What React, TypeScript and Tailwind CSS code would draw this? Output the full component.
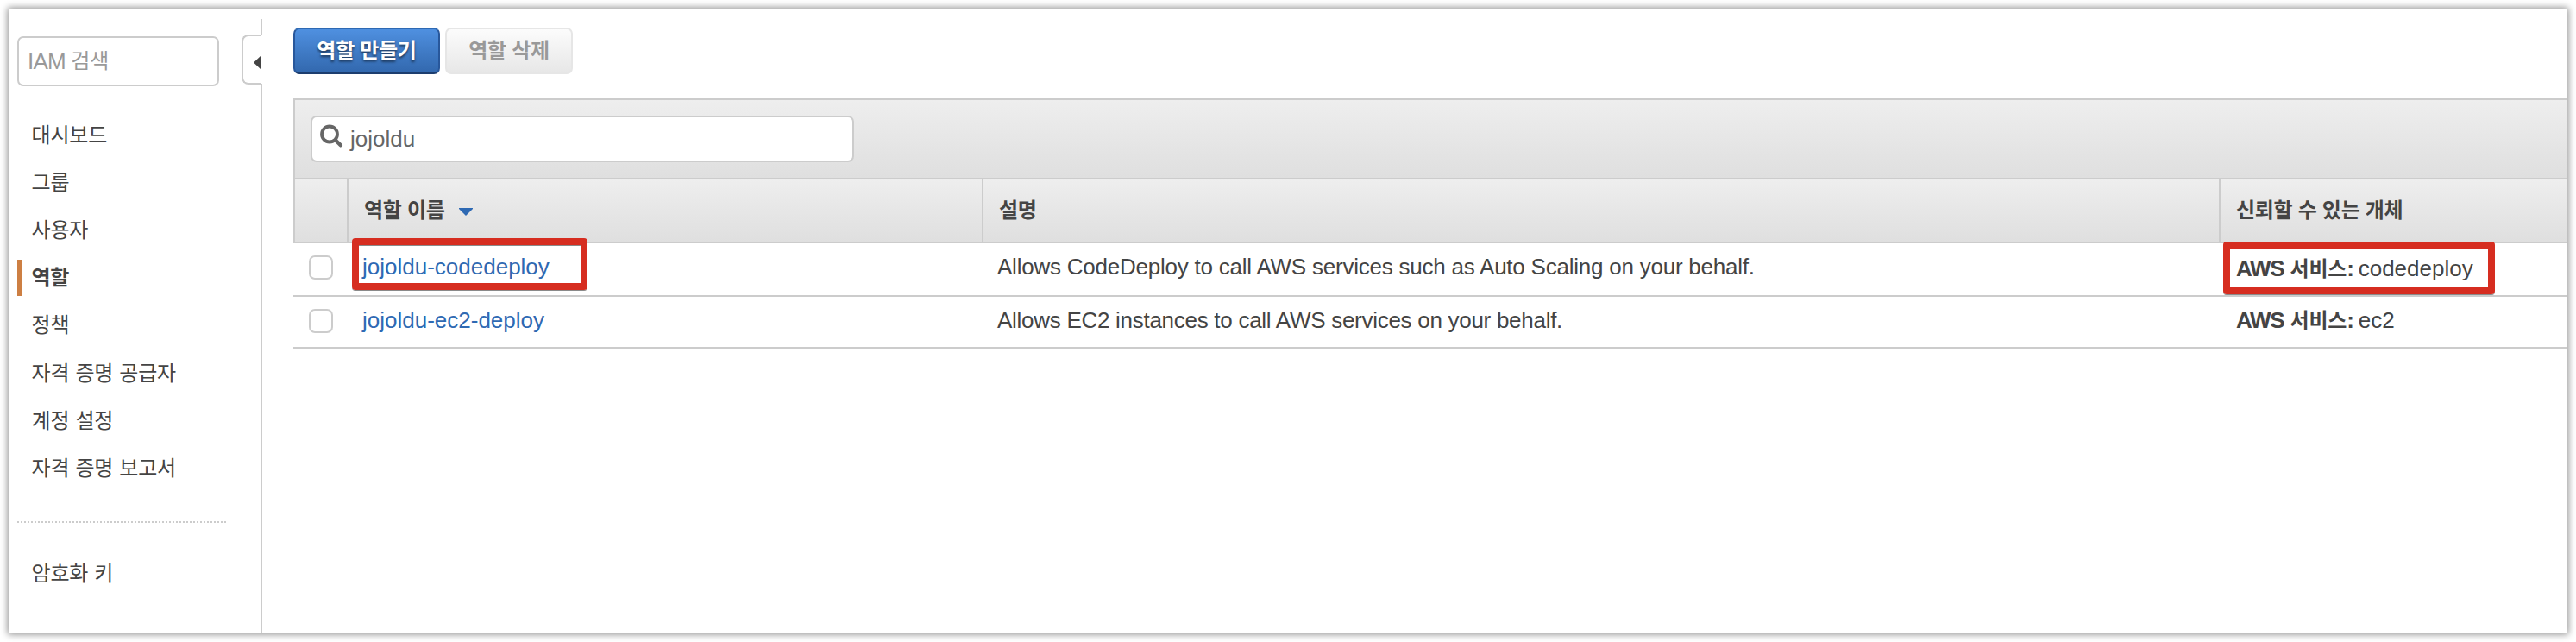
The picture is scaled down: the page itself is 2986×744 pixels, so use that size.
const NAV = ["대시보드", "그룹", "사용자", "역할", "정책", "자격 증명 공급자", "계정 설정", "자격 증명 보고서"];

const ROLES = [
  {
    name: "jojoldu-codedeploy",
    description: "Allows CodeDeploy to call AWS services such as Auto Scaling on your behalf.",
    tracking: "tracking-[-0.23px]",
    service: "codedeploy",
    marked: true,
  },
  {
    name: "jojoldu-ec2-deploy",
    description: "Allows EC2 instances to call AWS services on your behalf.",
    tracking: "tracking-[-0.28px]",
    service: "ec2",
    marked: false,
  },
];

const KO = "text-[24px] tracking-[-0.2px] [word-spacing:0.7px]";
const KO_BOLD = "text-[24px] tracking-[-0.3px] font-bold";

function Sidebar() {
  return (
    <aside className="flex w-[294px] shrink-0">
      <div className="flex flex-1 flex-col pl-[10px]">
        <div className="mt-8 flex h-[58px] w-[234px] items-center rounded-[7px] border-2 border-[#ccc] pl-[10px] text-[26px] text-[#999]">
          <span className="tracking-[-0.8px]">IAM&nbsp;</span>
          <span className={KO}>검색</span>
        </div>
        <nav className="mt-[29px] flex flex-col">
          {NAV.map((item) => (
            <a key={item} className="flex h-[55.2px] items-center">
              <span className={item === "역할" ? "h-[42px] w-[6px] bg-[#cd7f43]" : "h-[42px] w-[6px]"} />
              <span className={item === "역할" ? `${KO_BOLD} pl-[10.5px]` : `${KO} pl-[10.5px]`}>{item}</span>
            </a>
          ))}
        </nav>
        <div className="mt-[33px] h-[2px] w-[242px] bg-[repeating-linear-gradient(90deg,#ccc_0px,#ccc_2px,transparent_2px,transparent_4px)]" />
        <a className={`${KO} mt-[31px] flex h-[56px] items-center pl-[16.5px]`}>암호화 키</a>
      </div>
      <div className="flex w-6 flex-col">
        <div className="mt-3 h-[18px] border-r-2 border-[#ccc]" />
        <div className="mr-px flex h-[58px] items-center justify-end rounded-l-[8px] border-2 border-r-0 border-[#ccc] pt-[6px]">
          <svg width="9" height="17" viewBox="0 0 9 17" className="fill-[#444]">
            <path d="M9 0v17L0 8.5z" />
          </svg>
        </div>
        <div className="-mt-px flex-1 border-r-2 border-[#ccc]" />
      </div>
    </aside>
  );
}

function Marker({ className }: { className: string }) {
  return (
    <span
      className={`pointer-events-none absolute rounded-[4px] border-8 border-[#d62d20] shadow-[0_1px_0_#8a8a8a,inset_0_1px_0_#8a8a8a] ${className}`}
    />
  );
}

export default function App() {
  return (
    <div className="h-[744px] w-[2986px] overflow-hidden bg-white p-[10px] font-['Liberation_Sans','Noto_Sans_CJK_KR',sans-serif] text-[#444]">
      <div className="flex h-[724px] w-[2966px] bg-white shadow-[0_0_8px_1px_rgba(0,0,0,0.45)]">
        <Sidebar />
        <main className="flex min-w-0 flex-1 flex-col pl-9 pt-[22px]">
          <div className="flex gap-[6px]">
            <button className="flex h-[54px] w-[170px] items-center justify-center rounded-[7px] border-2 border-[#28579b] border-b-[#1c3d6e] border-t-[#2e69b3] bg-linear-to-b from-[#4f90e0] to-[#3268ae] text-white [text-shadow:0_2px_3px_rgba(0,0,0,0.6)]">
              <span className={KO_BOLD}>역할 만들기</span>
            </button>
            <button className="flex h-[54px] w-[148px] items-center justify-center rounded-[7px] border-2 border-[#e6e6e6] bg-linear-to-b from-[#fcfcfc] to-[#e7e7e7] text-[#999]">
              <span className={KO_BOLD}>역할 삭제</span>
            </button>
          </div>

          <section className="mt-7 flex flex-col">
            <div className="flex h-[92px] items-center border-l-2 border-t-2 border-[#ccc] bg-linear-to-b from-[#eee] to-[#dfdfdf] pl-[18px]">
              <div className="flex h-[54px] w-[630px] items-center rounded-[7px] border-2 border-[#ccc] bg-white pl-[9px] text-[26px] text-[#666]">
                <svg width="27" height="27" viewBox="0 0 27 27" className="mb-[7px] fill-none stroke-[#666]">
                  <circle cx="11" cy="11.5" r="9" strokeWidth="3.8" />
                  <path d="M18 18.5l5.8 5.8" strokeWidth="4.4" strokeLinecap="round" />
                </svg>
                <span className="pl-2">jojoldu</span>
              </div>
            </div>

            <div className="flex h-[76px] border-y-2 border-l-2 border-[#ccc] bg-linear-to-b from-[#eee] to-[#dfdfdf]">
              <div className="w-[62px] border-r-2 border-[#ccc]" />
              <div className="flex w-[736px] items-center border-r-2 border-[#ccc] pl-[18px]">
                <span className={KO_BOLD}>역할 이름</span>
                <svg width="16" height="9" viewBox="0 0 16 9" className="ml-4 mt-[3px] fill-[#2e69b3]">
                  <path d="M0 0h16v1L8 9 0 1z" />
                </svg>
              </div>
              <div className="flex w-[1434px] items-center border-r-2 border-[#ccc] pl-[18px]">
                <span className={KO_BOLD}>설명</span>
              </div>
              <div className="flex flex-1 items-center pl-[18px]">
                <span className={KO_BOLD}>신뢰할 수 있는 개체</span>
              </div>
            </div>

            {ROLES.map((role) => (
              <div
                key={role.name}
                className={
                  role.marked
                    ? "flex h-[62px] items-start border-b-2 border-[#ccc] pt-[11px] text-[26px] leading-[32px]"
                    : "flex h-[60px] items-start border-b-2 border-[#ccc] pt-[11px] text-[26px] leading-[32px]"
                }
              >
                <div className="w-[64px] pl-[18px] pt-[3px]">
                  <div className="h-7 w-7 rounded-[7px] border-2 border-[#ccc] bg-white" />
                </div>
                <div className="relative w-[736px] pl-4">
                  <a className="text-[#2e69b3]">{role.name}</a>
                  {role.marked && <Marker className="-top-[17px] left-1 h-[60px] w-[273px]" />}
                </div>
                <div className="w-[1434px] pl-4">
                  <span className={role.tracking}>{role.description}</span>
                </div>
                <div className={role.marked ? "relative flex-1 pl-[18px] pt-[2px]" : "relative flex-1 pl-[18px]"}>
                  <b>
                    <span className="tracking-[-1.3px]">AWS</span> <span className={KO}>서비스</span>
                    <span className="tracking-[-2.4px]">:</span>
                  </b>{" "}
                  <span>{role.service}</span>
                  {role.marked && <Marker className="-top-[13px] left-[3px] h-[61px] w-[315px]" />}
                </div>
              </div>
            ))}
          </section>
        </main>
      </div>
    </div>
  );
}
